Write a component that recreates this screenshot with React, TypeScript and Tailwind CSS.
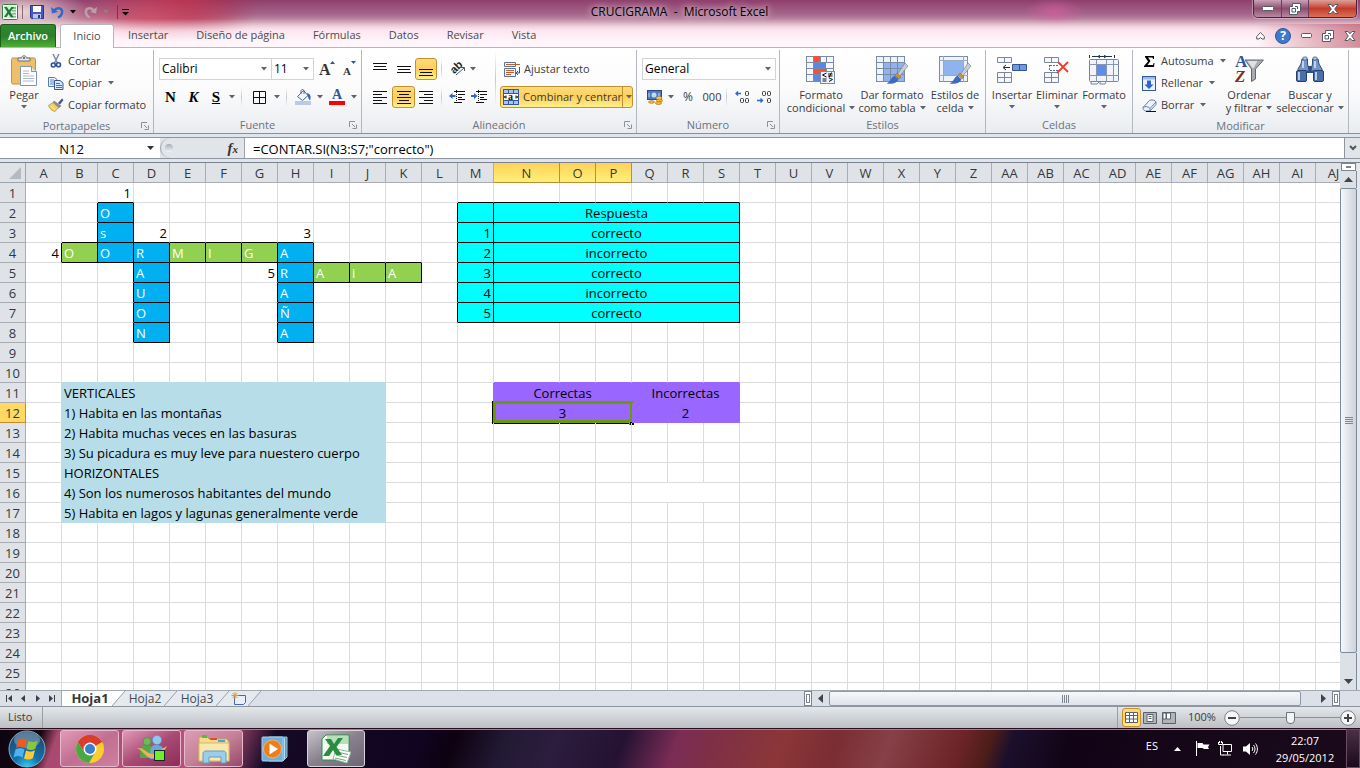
import React, { useState } from 'react';
import clsx from 'clsx';

const GRID_ROWS = 40;
const COLUMN_COUNT = 54;

const columnName = (index: number): string =>
  index < 26 ? String.fromCharCode(65 + index) : columnName(Math.floor(index / 26) - 1) + String.fromCharCode(65 + (index % 26));

const COLUMNS = Array.from({ length: COLUMN_COUNT }, (_, i) => columnName(i));
const columnIndex = (name: string) => COLUMNS.indexOf(name);

type Tone = 'blue' | 'green' | 'cyan' | 'clue' | 'violet';

interface CellData {
  text?: string;
  tone?: Tone;
  align?: 'left' | 'center' | 'right';
  span?: number;
}

const CELLS: Record<string, CellData> = {
  C1: { text: '1', align: 'right' },
  C2: { text: 'O', tone: 'blue' },
  C3: { text: 's', tone: 'blue' },
  D3: { text: '2', align: 'right' },
  H3: { text: '3', align: 'right' },
  A4: { text: '4', align: 'right' },
  B4: { text: 'O', tone: 'green' },
  C4: { text: 'O', tone: 'blue' },
  D4: { text: 'R', tone: 'blue' },
  E4: { text: 'M', tone: 'green' },
  F4: { text: 'I', tone: 'green' },
  G4: { text: 'G', tone: 'green' },
  H4: { text: 'A', tone: 'blue' },
  D5: { text: 'A', tone: 'blue' },
  G5: { text: '5', align: 'right' },
  H5: { text: 'R', tone: 'blue' },
  I5: { text: 'A', tone: 'green' },
  J5: { text: 'i', tone: 'green' },
  K5: { text: 'A', tone: 'green' },
  D6: { text: 'U', tone: 'blue' },
  H6: { text: 'A', tone: 'blue' },
  D7: { text: 'O', tone: 'blue' },
  H7: { text: 'Ñ', tone: 'blue' },
  D8: { text: 'N', tone: 'blue' },
  H8: { text: 'A', tone: 'blue' },
  M2: { tone: 'cyan' },
  N2: { text: 'Respuesta', tone: 'cyan', align: 'center', span: 6 },
  N11: { text: 'Correctas', tone: 'violet', align: 'center', span: 3 },
  Q11: { text: 'Incorrectas', tone: 'violet', align: 'center', span: 3 },
  N12: { text: '3', tone: 'violet', align: 'center', span: 3 },
  Q12: { text: '2', tone: 'violet', align: 'center', span: 3 },
  Q16: { span: 3 },
};

['correcto', 'incorrecto', 'correcto', 'incorrecto', 'correcto'].forEach((answer, i) => {
  CELLS[`M${i + 3}`] = { text: String(i + 1), tone: 'cyan', align: 'right' };
  CELLS[`N${i + 3}`] = { text: answer, tone: 'cyan', align: 'center', span: 6 };
});

[
  'VERTICALES',
  '1) Habita en las montañas',
  '2) Habita muchas veces en las basuras',
  '3) Su picadura es muy leve para nuestero cuerpo',
  'HORIZONTALES',
  '4) Son los numerosos habitantes del mundo',
  '5) Habita en lagos y lagunas generalmente verde',
].forEach((clue, i) => {
  CELLS[`B${i + 11}`] = { text: clue, tone: 'clue', span: 9 };
});

// every covered square of a merged cell points at the tone of its first square
const TONES: Record<string, Tone> = {};
const COVERED = new Set<string>();
Object.entries(CELLS).forEach(([key, cell]) => {
  const col = columnIndex(key.replace(/\d+/, ''));
  const row = key.replace(/\D+/, '');
  for (let i = 0; i < (cell.span ?? 1); i += 1) {
    const name = `${COLUMNS[col + i]}${row}`;
    if (cell.tone) TONES[name] = cell.tone;
    if (i > 0) COVERED.add(name);
  }
});

const TONE_CLASS: Record<Tone, string> = {
  blue: 'bg-[#00b0f0] text-white',
  green: 'bg-[#92d050] text-white',
  cyan: 'bg-[#00ffff] text-black',
  clue: 'bg-[#b7dde8] text-black',
  violet: 'bg-[#9966ff] text-black',
};

const edgeOf = (own?: Tone, next?: Tone): 'black' | 'clue' | 'violet' | 'line' => {
  const tones = [own, next];
  if (tones.some((t) => t === 'blue' || t === 'green' || t === 'cyan')) return 'black';
  if (tones.includes('clue')) return 'clue';
  if (tones.includes('violet')) return 'violet';
  return 'line';
};

const RIGHT_EDGE = { black: 'border-r-black', clue: 'border-r-[#b7dde8]', violet: 'border-r-[#9966ff]', line: 'border-r-[#dadcdd]' };
const BOTTOM_EDGE = { black: 'border-b-black', clue: 'border-b-[#b7dde8]', violet: 'border-b-[#9966ff]', line: 'border-b-[#dadcdd]' };

const Caret = ({ className = '' }: { className?: string }) => (
  <svg width="6" height="4" viewBox="0 0 6 4" className={clsx('shrink-0 fill-[#5f646c]', className)} aria-hidden="true">
    <path d="M0 0h6L3 3.6z" />
  </svg>
);

const Divider = ({ className = '' }: { className?: string }) => (
  <span className={clsx('w-px shrink-0 bg-gradient-to-b from-transparent via-[#c5c9cf] to-transparent', className)} />
);

interface GroupProps {
  label: string;
  className: string;
  launcher?: boolean;
  children: React.ReactNode;
}

const Group = ({ label, className, launcher, children }: GroupProps) => (
  <section aria-label={label} className={clsx('flex shrink-0 flex-col border-r border-[#b4b8be]', className)}>
    <div className="h-[66px]">{children}</div>
    <div className="relative h-[18px] pt-0.5 text-center leading-4 text-[#6b7280]">
      {label}
      {launcher && (
        <button type="button" aria-label={`Opciones de ${label}`} className="absolute right-1 top-1.5">
          <svg width="8" height="8" viewBox="0 0 8 8" fill="none" stroke="#8d9299" aria-hidden="true">
            <path d="M.5 6V.5H6M3 3l3 3M7.5 3.5v4h-4" />
          </svg>
        </button>
      )}
    </div>
  </section>
);

interface BigButtonProps {
  icon: React.ReactNode;
  lines: string[];
  className: string;
}

const BigButton = ({ icon, lines, className }: BigButtonProps) => (
  <button type="button" className={clsx('flex shrink-0 flex-col items-center pt-1', className)}>
    <span className="flex h-8 items-center">{icon}</span>
    {lines.map((line, i) => (
      <span key={line} className={clsx('flex h-[13px] items-center gap-1 whitespace-nowrap leading-[13px]', i === 0 && 'mt-0.5')}>
        {line}
        {i === 1 && <Caret />}
      </span>
    ))}
    {lines.length === 1 && <Caret className="mt-1" />}
  </button>
);

interface SmallButtonProps {
  icon: React.ReactNode;
  label: string;
  caret?: boolean;
}

const SmallButton = ({ icon, label, caret }: SmallButtonProps) => (
  <button type="button" className="flex h-[22px] items-center gap-1 whitespace-nowrap">
    <span className="flex w-4 justify-center">{icon}</span>
    {label}
    {caret && <Caret className="ml-0.5" />}
  </button>
);

const ToolButton = ({ label, className, children }: { label: string; className: string; children: React.ReactNode }) => (
  <button type="button" aria-label={label} className={clsx('flex h-[22px] shrink-0 items-center justify-center', className)}>
    {children}
  </button>
);

const ACTIVE = 'rounded-[3px] border border-[#c29232] bg-gradient-to-b from-[#fddb7b] via-[#fecf57] to-[#fff08a]';

const Lines = ({ rows }: { rows: [number, number, number][] }) => (
  <svg width="16" height="16" viewBox="0 0 16 16" fill="#111" aria-hidden="true">
    {rows.map(([x, y, w]) => (
      <rect key={y} x={x} y={y} width={w} height="1" />
    ))}
  </svg>
);

const ExcelLogo = ({ size }: { size: number }) => (
  <svg width={size} height={size} viewBox="0 0 16 16" aria-hidden="true">
    <rect x=".5" y=".5" width="15" height="15" rx="1" fill="#fff" stroke="#2b8a3e" />
    <rect x="2" y="2" width="12" height="12" fill="#d8eed8" />
    <path d="M9 3h5v2H9zM10 6h4v1.500h-4zM10 9h4v1.500h-4zM9 12h5v1.500H9z" fill="#7fbf86" />
    <path d="M2 3h3l2 3.200L9.500 3H12L8.300 8l3.400 5.200H8.600L6.600 9.900 4.600 13H2l3.400-5z" fill="#1d7a35" />
  </svg>
);

const ScissorsIcon = () => (
  <svg width="12" height="16" viewBox="0 0 12 16" fill="none" aria-hidden="true">
    <path d="M3 1l4.500 9M9 1L4.500 10" stroke="#7d8ca3" strokeWidth="1.600" />
    <circle cx="3.300" cy="12" r="2" stroke="#2c4f9e" strokeWidth="1.600" />
    <circle cx="8.500" cy="11.800" r="2" stroke="#2c4f9e" strokeWidth="1.600" />
  </svg>
);

const CopyIcon = () => (
  <svg width="16" height="14" viewBox="0 0 16 14" aria-hidden="true">
    <path d="M.5 1.500h6l2.500 2v7H.5z" fill="#eaf1fb" stroke="#5b7bb5" />
    <path d="M2 4h4M2 6h4M2 8h4" stroke="#5b86cf" />
    <path d="M6.500 4.500h5.500l3 2.500v6.500H6.500z" fill="#dfeafa" stroke="#31579f" />
    <path d="M8 7.500h4M8 9.500h6M8 11.500h6" stroke="#3f6dc0" />
  </svg>
);

const BrushIcon = () => (
  <svg width="16" height="14" viewBox="0 0 16 14" aria-hidden="true">
    <path d="M10 5l4-4.500 1.500 1.500L12 6.500z" fill="#4a4f8c" />
    <path d="M6 3l7 5-2.500 2L5 5z" fill="#8c8f96" stroke="#666" strokeWidth=".5" />
    <path d="M5 4.500l5.500 5L7 13.500C4 13 1.500 10.500.5 7.500z" fill="#f3cf63" stroke="#b08a2b" strokeWidth=".7" />
    <path d="M3 7.500L7 12" stroke="#fff2b8" />
  </svg>
);

const ClipboardIcon = () => (
  <svg width="28" height="31" viewBox="0 0 28 31" aria-hidden="true">
    <rect x="1.500" y="3" width="24" height="26" rx="1.500" fill="#eebf6a" stroke="#c8913b" />
    <path d="M8 6V3h3.500c0-3 5-3 5 0H20v3z" fill="#e3e5e8" stroke="#6d7178" />
    <circle cx="14" cy="3" r="1" fill="#555" />
    <path d="M10.500 11.500h11l5 5v14h-16z" fill="#fff" stroke="#7f93b5" />
    <path d="M21.500 11.500v5h5" fill="#dce6f3" stroke="#7f93b5" />
    <path d="M13 16h6M13 18.500h6M13 21h11M13 23.500h11M13 26h11" stroke="#a9b9d2" />
  </svg>
);

const PaintBrush = () => (
  <g>
    <path d="M30 8L22 20l2 2 9-11z" fill="#c9ccd1" stroke="#777" strokeWidth=".6" />
    <path d="M20 20l2-2 4 4-2 2z" fill="#c79243" stroke="#8a6122" strokeWidth=".5" />
    <path d="M19.500 20.500l4 4c-2 4-6 5-12 4 4-1.500 4-5.500 8-8z" fill="#3a6cc4" />
  </g>
);

const ConditionalIcon = () => (
  <svg width="32" height="30" viewBox="0 0 32 30" aria-hidden="true">
    <rect x="1.500" y="1.500" width="27" height="25" fill="#f3f7fc" stroke="#7a8ba6" />
    <path d="M8 1h7v6H8zM8 13h13v6H8z" fill="#f0503c" />
    <path d="M8 7h13v6H8zM8 20h7v6H8z" fill="#5b86e5" />
    <path d="M1 7.500h28M1 13.500h28M1 19.500h28M8.500 1v25M21.500 1v6M15.500 1v6M21.500 13v7" stroke="#7a8ba6" fill="none" />
    <rect x="15.500" y="16.500" width="14" height="12" fill="#eef4fb" stroke="#7a8ba6" />
    <path d="M21.500 18l-4 2 4 2M17.500 24h4M17.500 26h4M23 19h4.500M23 21h4.500M26.500 17.500l-2.500 5M24 23l3.500 1.500L24 26.500" stroke="#111" fill="none" />
  </svg>
);

const TableFormatIcon = () => (
  <svg width="34" height="30" viewBox="0 0 34 30" aria-hidden="true">
    <rect x="1.500" y="1.500" width="28" height="25" fill="#eef3fa" stroke="#7a8ba6" />
    <path d="M9 8h20v18H9z" fill="#8fb3ef" />
    <path d="M1 7.500h29M1 13.500h29M1 19.500h29M8.500 1v26M15.500 1v26M22.500 1v26" stroke="#7a8ba6" fill="none" />
    <PaintBrush />
  </svg>
);

const CellStylesIcon = () => (
  <svg width="34" height="30" viewBox="0 0 34 30" aria-hidden="true">
    <rect x="1.500" y="1.500" width="28" height="25" fill="#eef3fa" stroke="#7a8ba6" />
    <path d="M6 6h19v14H6z" fill="#8fb3ef" />
    <path d="M1 5.500h29M1 20.500h29M5.500 1v26M25.500 1v26" stroke="#9aa9c0" fill="none" />
    <PaintBrush />
  </svg>
);

const InsertCellsIcon = () => (
  <svg width="32" height="28" viewBox="0 0 32 28" aria-hidden="true">
    <path d="M1.500 1.500h14v5h-14zM8.500 1.500v5M1.500 16.500h14v10h-14zM8.500 16.500v10M1.500 21.500h14" fill="#f5f7fa" stroke="#7b8798" />
    <path d="M16.500 8.500h14v6h-14z" fill="#6e98e8" stroke="#35558f" />
    <path d="M23.500 8.500v6" stroke="#35558f" />
    <path d="M14 11.500H8M10 9l-3 2.500L10 14" stroke="#1c2a44" fill="none" />
  </svg>
);

const DeleteCellsIcon = () => (
  <svg width="28" height="28" viewBox="0 0 28 28" aria-hidden="true">
    <path d="M1.500 1.500h14v5h-14zM8.500 1.500v5M1.500 16.500h14v10h-14zM8.500 16.500v10M1.500 21.500h14" fill="#f5f7fa" stroke="#7b8798" />
    <path d="M7 9.500h8M7 14.500h8M6.500 9v6" stroke="#3f6dc0" strokeDasharray="2 1" />
    <path d="M15 6l10 10M25 6L14 17" stroke="#f23c22" strokeWidth="1.800" />
  </svg>
);

const FormatCellsIcon = () => (
  <svg width="32" height="31" viewBox="0 0 32 31" aria-hidden="true">
    <path d="M1.500 3V0M26.500 3V0M4 1.500h20M12 0l-2 1.500L12 3M16 0l2 1.500L16 3" stroke="#1f3252" fill="none" />
    <rect x="1.500" y="4.500" width="29" height="22" rx="1" fill="#f1f5fb" stroke="#73849f" />
    <path d="M1 9.500h30M1 20.500h30M8.500 5v22M18.500 5v22M25.500 5v22" stroke="#8796ae" fill="none" />
    <path d="M9 10h9v10H9z" fill="#5f8de6" />
    <path d="M3 27v2h6l2-2M12 27v2h5l1-2" stroke="#73849f" fill="none" />
  </svg>
);

const SortFilterIcon = () => (
  <svg width="32" height="32" viewBox="0 0 32 32" aria-hidden="true">
    <text x="2" y="13" fontFamily="Liberation Serif" fontWeight="700" fontSize="17" fill="#2f5597">A</text>
    <text x="2" y="28" fontFamily="Liberation Serif" fontWeight="700" fontStyle="italic" fontSize="17" fill="#8b2a22">Z</text>
    <path d="M12 6h18.500L22.500 15v10l-4 2.500V15z" fill="#a8acb1" stroke="#64686d" />
    <path d="M14.500 7h10l-4 7h-1z" fill="#dfe1e4" />
  </svg>
);

const BinocularsIcon = () => (
  <svg width="30" height="28" viewBox="0 0 30 28" aria-hidden="true">
    <path d="M12 10h6v7h-6z" fill="#30507f" />
    <path d="M7 3h5.500v5L14 14v1H3v-2L6 8zM23 3h-5.500v5L16 14v1h11v-2l-3-5z" fill="#7395c4" stroke="#32507f" />
    <rect x="8" y="1" width="4" height="3" rx="1" fill="#b8cbe6" stroke="#32507f" strokeWidth=".7" />
    <rect x="18" y="1" width="4" height="3" rx="1" fill="#b8cbe6" stroke="#32507f" strokeWidth=".7" />
    <rect x="1.500" y="14.500" width="10" height="11" rx="1.500" fill="#4a6fa9" stroke="#263f6b" />
    <rect x="18.500" y="14.500" width="10" height="11" rx="1.500" fill="#4a6fa9" stroke="#263f6b" />
    <path d="M4 16v8M21 16v8M8 5v7M20 5v7" stroke="#d5e2f4" strokeWidth="1.600" />
  </svg>
);

const FillBucketIcon = () => (
  <svg width="17" height="16" viewBox="0 0 17 16" aria-hidden="true">
    <path d="M2.500 7.500l6-6 4.500 5-5.500 5z" fill="#f2f6fb" stroke="#4a6695" />
    <path d="M6 5V2c0-2 3-2 3 0v3" fill="none" stroke="#4a6695" />
    <path d="M12 4c4 1 4 4 3 7.500-1-1-1.500-2-2.500-5z" fill="#3467b5" />
    <rect y="12" width="16" height="4" fill="#b8cce4" />
  </svg>
);

const FontColorIcon = () => (
  <svg width="16" height="16" viewBox="0 0 16 16" aria-hidden="true">
    <text x="3" y="10" fontFamily="Liberation Serif" fontWeight="700" fontSize="14" fill="#2f5597">A</text>
    <rect y="12" width="16" height="4" fill="#f00" />
  </svg>
);

const MergeIcon = () => (
  <svg width="16" height="16" viewBox="0 0 16 16" aria-hidden="true">
    <rect x=".5" y=".5" width="15" height="15" fill="#fff" stroke="#31579f" />
    <path d="M1 1h14v3H1zM1 12h14v3H1z" fill="#a9c3ec" />
    <path d="M0 4.500h16M0 11.500h16M5.500 1v3M10.500 1v3M5.500 12v3M10.500 12v3" stroke="#31579f" />
    <text x="5" y="11" fontFamily="Liberation Serif" fontWeight="700" fontSize="10" fill="#111">a</text>
    <path d="M1 8h3M3 6.500L1.500 8 3 9.500M15 8h-3M13 6.500L14.500 8 13 9.500" stroke="#111" fill="none" />
  </svg>
);

const WrapIcon = () => (
  <svg width="16" height="15" viewBox="0 0 16 15" aria-hidden="true">
    <path d="M.5.5h11v4H.5zM.5 6.500h11v8H.5z" fill="#eef3fa" stroke="#5b7298" />
    <path d="M2 2.500h14M2 8.500h8M2 10.500h8M2 12.500h5" stroke="#b5602e" />
    <path d="M15.500 5v6h-3M14 9l-2 2 2 2" stroke="#2f5597" fill="none" />
  </svg>
);

const OrientationIcon = () => (
  <svg width="18" height="16" viewBox="0 0 18 16" aria-hidden="true">
    <text x="1" y="11" transform="rotate(-45 6 7)" fontFamily="Liberation Sans" fontWeight="700" fontSize="11" fill="#222">ab</text>
    <path d="M7 14l8-7M15.500 10V6.500h-4" stroke="#555" fill="none" />
  </svg>
);

const IndentIcon = ({ flip }: { flip?: boolean }) => (
  <svg width="17" height="16" viewBox="0 0 17 16" aria-hidden="true">
    <path d="M5 2.500h11M9 5.500h7M9 8.500h4M9 10.500h7M5 13.500h8" stroke="#111" />
    <path d="M7.500 1v14" stroke="#111" strokeDasharray="1 1" />
    <path d={flip ? 'M0 6h3V4l3.500 3L3 10V8H0z' : 'M6.500 6h-3V4L0 7l3.500 3V8h3z'} fill="#2f66c9" />
  </svg>
);

const CurrencyIcon = () => (
  <svg width="18" height="17" viewBox="0 0 18 17" aria-hidden="true">
    <rect x="1.500" y="1.500" width="14" height="9" fill="#4f7ac0" stroke="#2b4a86" />
    <circle cx="8" cy="6" r="2.500" fill="#c7d8f2" />
    <path d="M3 4v4M13 4v4" stroke="#c7d8f2" />
    <ellipse cx="13" cy="9" rx="3" ry="1.500" fill="#ffd75e" stroke="#a8741a" strokeWidth=".7" />
    <ellipse cx="13.500" cy="11.500" rx="3" ry="1.500" fill="#f8b93a" stroke="#a8741a" strokeWidth=".7" />
    <ellipse cx="12.500" cy="14" rx="3" ry="1.500" fill="#f8b93a" stroke="#a8741a" strokeWidth=".7" />
    <ellipse cx="5.500" cy="13" rx="3" ry="1.300" fill="#f8b93a" stroke="#a8741a" strokeWidth=".7" />
  </svg>
);

const DecimalIcon = ({ reduce }: { reduce?: boolean }) => (
  <svg width="16" height="16" viewBox="0 0 16 16" aria-hidden="true">
    <g fill="none" stroke="#333">
      <rect x="11.500" y="2.500" width="3" height="4" rx="1" />
      <rect x="11.500" y="9.500" width="3" height="4" rx="1" />
      <rect x="6.500" y={reduce ? 2.5 : 9.5} width="3" height="4" rx="1" />
    </g>
    <path d={reduce ? 'M1 11.500h5M4.500 9.500l2 2-2 2' : 'M2 4.500h5M4 2.500l-2 2 2 2'} stroke="#2f66c9" fill="none" strokeWidth="1.400" />
  </svg>
);

const SigmaIcon = () => (
  <svg width="11" height="11" viewBox="0 0 11 11" aria-hidden="true">
    <path d="M1 0h9v3H9l-.5-1.500H4L6.500 5 3.500 9H9l.7-2h.8L10 11H0v-1l4-4.500L1 1z" />
  </svg>
);

const FillDownIcon = () => (
  <svg width="14" height="15" viewBox="0 0 14 15" aria-hidden="true">
    <rect x=".5" y=".5" width="13" height="14" fill="#eaf1fb" stroke="#31579f" />
    <path d="M1 1h12v2.500H1z" fill="#9fb9e2" />
    <path d="M5 4.500h4v4h2.500L7 13 2.500 8.500H5z" fill="#2f66c9" />
  </svg>
);

const EraserIcon = () => (
  <svg width="15" height="13" viewBox="0 0 15 13" aria-hidden="true">
    <path d="M1 8.500L7.500 1.500C9 .3 13.500 1 14 3v2.500L8 12H3.500C1.500 11.500.8 10 1 8.500z" fill="#eef2f8" stroke="#6a7ea3" />
    <path d="M1 8.500C3 7 7 7.500 8 9.500V12M8 9.500L14 3" fill="none" stroke="#6a7ea3" />
    <path d="M4 12.500h10" stroke="#111" />
  </svg>
);

const QuickAccess = () => (
  <div className="flex h-6 flex-1 items-center pl-0.5">
    <ExcelLogo size={16} />
    <span className="ml-1 h-3.5 w-px bg-[#8d6a75]" />
    <button type="button" aria-label="Guardar" className="ml-1.5">
      <svg width="16" height="16" viewBox="0 0 16 16" aria-hidden="true">
        <path d="M1.500 1.500h13v13h-12l-1-1z" fill="#4559c0" stroke="#28358c" />
        <path d="M4 2h8v6H4z" fill="#fff" />
        <path d="M4 10h8v4.500H4z" fill="#b9c6e8" />
        <path d="M9 11h2v3H9z" fill="#28358c" />
      </svg>
    </button>
    <button type="button" aria-label="Deshacer" className="ml-1.5 flex items-center gap-1.5">
      <svg width="13" height="14" viewBox="0 0 13 14" fill="none" aria-hidden="true">
        <path d="M3 6c3-4.500 9-3 8 2-.4 2-1.500 3.500-4 4.500" stroke="#2f6ac8" strokeWidth="2.400" />
        <path d="M0 2l1 6.500L7 7z" fill="#2f6ac8" />
      </svg>
      <Caret className="fill-black" />
    </button>
    <button type="button" aria-label="Rehacer" className="ml-2 flex items-center gap-1.5">
      <svg width="13" height="14" viewBox="0 0 13 14" fill="none" aria-hidden="true">
        <path d="M10 6C7 1.500 1 3 2 8c.4 2 1.500 3.500 4 4.500" stroke="#b8a0a4" strokeWidth="2.400" />
        <path d="M13 2l-1 6.500L6 7z" fill="#b8a0a4" />
      </svg>
      <Caret className="fill-[#9d7c80]" />
    </button>
    <span className="ml-2 h-3.5 w-px bg-[#6b3c46]" />
    <button type="button" aria-label="Personalizar barra de acceso rápido" className="ml-1">
      <svg width="7" height="7" viewBox="0 0 7 7" aria-hidden="true">
        <path d="M0 0h7v1H0zM0 3h7L3.500 6.500z" />
      </svg>
    </button>
  </div>
);

const RestoreGlyph = ({ size }: { size: number }) => (
  <svg width={size} height={size} viewBox="0 0 12 12" aria-hidden="true">
    <path d="M3.500.5h8v8h-3v3h-8v-8h3z" fill="#fff" stroke="#555b66" />
    <path d="M3 5.500h3.500V9H3zM6 3.500h2.500V6" fill="none" stroke="#555b66" />
  </svg>
);

const CrossGlyph = () => (
  <svg width="12" height="10" viewBox="0 0 12 10" aria-hidden="true">
    <path d="M1 .5h3l2 2.300L8 .5h3L7.700 5 11 9.500H8L6 7.200 4 9.500H1L4.300 5z" fill="#fff" stroke="#555b66" />
  </svg>
);

const WindowButtons = () => (
  <div className="flex h-6 flex-1 items-start justify-end pr-[3px]">
    <div className="flex h-[18px] overflow-hidden rounded-b-[5px] border border-t-0 border-[#4f2138] shadow-[0_0_0_1px_rgba(255,255,255,0.35)]">
      <button type="button" aria-label="Minimizar" className="flex w-7 items-center justify-center border-r border-[#6d3c57] bg-gradient-to-b from-[#c9a3b8] via-[#8c4e70] to-[#b98aa2]">
        <svg width="12" height="5" viewBox="0 0 12 5" aria-hidden="true"><rect x=".5" y=".5" width="11" height="4" rx="1" fill="#fff" stroke="#555b66" /></svg>
      </button>
      <button type="button" aria-label="Restaurar" className="flex w-[27px] items-center justify-center border-r border-[#6d3c57] bg-gradient-to-b from-[#c9a3b8] via-[#8c4e70] to-[#b98aa2]">
        <RestoreGlyph size={12} />
      </button>
      <button type="button" aria-label="Cerrar" className="flex w-[47px] items-center justify-center bg-gradient-to-b from-[#dc9f98] via-[#c23b2b] to-[#d9705a]">
        <CrossGlyph />
      </button>
    </div>
  </div>
);

const RIBBON_TABS = ['Insertar', 'Diseño de página', 'Fórmulas', 'Datos', 'Revisar', 'Vista'];

const Header = () => (
  <header className="bg-[linear-gradient(transparent_40%,#fde8f1cc_66%,#fff5fa_90%),radial-gradient(ellipse_90px_30px_at_150px_18px,#d0526ccc,transparent),radial-gradient(ellipse_70px_26px_at_20px_12px,#ecd8d8,transparent),radial-gradient(ellipse_80px_60px_at_180px_0px,#b02c48,transparent),radial-gradient(ellipse_30px_14px_at_1054px_12px,#d85fa0aa,transparent),linear-gradient(#8f3f6c,#a5668b_30%,#c899ac_48%,#fbe0ec_66%,#fff5fa)]">
    <div className="flex h-6 items-center">
      <QuickAccess />
      <h1 className="whitespace-pre text-[12px] text-black [text-shadow:0_0_6px_#ffffffcc,0_0_10px_#ffffff99]">{'CRUCIGRAMA  -  Microsoft Excel'}</h1>
      <WindowButtons />
    </div>
    <div className="flex h-[23px] items-stretch">
      <button type="button" className="w-14 rounded-t-[3px] border border-b-0 border-[#19601b] bg-gradient-to-b from-[#2f8a31] via-[#2c7f2b] to-[#4faf35] text-center font-semibold text-white">
        Archivo
      </button>
      <nav className="flex flex-1 text-[#4c4c4c]">
        <button type="button" className="relative z-10 -mb-px ml-1 w-[54px] rounded-t-[3px] border border-b-0 border-[#b4b8be] bg-white">Inicio</button>
        {RIBBON_TABS.map((tab) => (
          <button key={tab} type="button" className="whitespace-nowrap px-3.5">{tab}</button>
        ))}
      </nav>
      <div className="flex items-center gap-2.5 bg-gradient-to-r from-transparent to-[#b5465a99] pr-1">
        <button type="button" aria-label="Minimizar la cinta">
          <svg width="9" height="8" viewBox="0 0 9 8" fill="#fff" stroke="#555b66" aria-hidden="true"><path d="M.7 4.500l3.800-4 3.800 4v2.500H6L4.500 5.500 3 7H.7z" /></svg>
        </button>
        <button type="button" aria-label="Ayuda" className="h-4 w-4 rounded-full border border-[#2c569f] bg-[#3f78cf] text-center text-[12px] font-bold leading-[14px] text-white">?</button>
        <button type="button" aria-label="Minimizar libro">
          <svg width="11" height="5" viewBox="0 0 11 5" aria-hidden="true"><rect x=".5" y=".5" width="10" height="4" rx="1" fill="#fff" stroke="#555b66" /></svg>
        </button>
        <button type="button" aria-label="Restaurar libro"><RestoreGlyph size={12} /></button>
        <button type="button" aria-label="Cerrar libro"><CrossGlyph /></button>
      </div>
    </div>
  </header>
);

interface ComboProps {
  label: string;
  value: string;
  className: string;
}

const Combo = ({ label, value, className }: ComboProps) => (
  <div className={clsx('relative h-[22px] border border-[#d0d3d8] bg-white', className)}>
    <select aria-label={label} defaultValue={value} className="h-full w-full appearance-none bg-transparent pl-0.5 text-[12px] text-black outline-none">
      <option>{value}</option>
    </select>
    <Caret className="pointer-events-none absolute right-1 top-2" />
  </div>
);

const FontGroup = () => (
  <Group label="Fuente" launcher className="w-[208px]">
    <div className="flex flex-col gap-1.5 pl-[5px] pt-2">
      <div className="flex">
        <Combo label="Fuente" value="Calibri" className="w-[113px]" />
        <Combo label="Tamaño" value="11" className="-ml-px w-[43px]" />
        <ToolButton label="Aumentar tamaño" className="ml-0.5 w-[22px]">
          <svg width="16" height="18" viewBox="0 0 16 18" aria-hidden="true">
            <text x="0" y="15" fontFamily="Liberation Serif" fontWeight="700" fontSize="16" fill="#333">A</text>
            <path d="M11 4l2.500-3L16 4z" fill="#2f5597" />
          </svg>
        </ToolButton>
        <ToolButton label="Disminuir tamaño" className="w-[22px]">
          <svg width="15" height="18" viewBox="0 0 15 18" aria-hidden="true">
            <text x="1" y="15" fontFamily="Liberation Serif" fontWeight="700" fontSize="11" fill="#333">A</text>
            <path d="M9 1l2.500 3L14 1z" fill="#2f5597" />
          </svg>
        </ToolButton>
      </div>
      <div className="flex items-center font-['Liberation_Serif',serif] text-[15px] leading-none text-black">
        <ToolButton label="Negrita" className="w-[23px] font-bold">N</ToolButton>
        <ToolButton label="Cursiva" className="w-[23px] font-bold italic">K</ToolButton>
        <ToolButton label="Subrayado" className="w-[22px] font-bold underline">S</ToolButton>
        <ToolButton label="Opciones de subrayado" className="w-[10px]"><Caret /></ToolButton>
        <Divider className="mx-1 h-5" />
        <ToolButton label="Bordes" className="w-[26px]">
          <svg width="13" height="13" viewBox="0 0 13 13" fill="none" stroke="#111" aria-hidden="true"><path d="M.5.5h12v12H.5zM6.500 1v11M1 6.500h11" /></svg>
        </ToolButton>
        <ToolButton label="Opciones de bordes" className="w-[10px]"><Caret /></ToolButton>
        <Divider className="mx-1 h-5" />
        <ToolButton label="Color de relleno" className="w-6"><FillBucketIcon /></ToolButton>
        <ToolButton label="Opciones de relleno" className="w-[10px]"><Caret /></ToolButton>
        <ToolButton label="Color de fuente" className="w-6"><FontColorIcon /></ToolButton>
        <ToolButton label="Opciones de color" className="w-[10px]"><Caret /></ToolButton>
      </div>
    </div>
  </Group>
);

const AlignmentGroup = () => (
  <Group label="Alineación" launcher className="w-[275px]">
    <div className="flex items-center">
      <div className="flex w-[133px] flex-col gap-1.5 pl-1.5 pt-2">
        <div className="flex items-center">
          <ToolButton label="Alinear arriba" className="w-6"><Lines rows={[[1, 2, 14], [2, 5, 12], [1, 8, 14]]} /></ToolButton>
          <ToolButton label="Alinear al medio" className="w-[23px]"><Lines rows={[[1, 5, 14], [2, 8, 12], [1, 11, 14]]} /></ToolButton>
          <ToolButton label="Alinear abajo" className={clsx('w-[22px]', ACTIVE)}><Lines rows={[[1, 8, 14], [2, 11, 12], [1, 14, 14]]} /></ToolButton>
          <Divider className="mx-1 h-5" />
          <ToolButton label="Orientación" className="w-6"><OrientationIcon /></ToolButton>
          <Caret />
        </div>
        <div className="flex items-center">
          <ToolButton label="Alinear a la izquierda" className="w-6"><Lines rows={[[1, 2, 14], [1, 5, 9], [1, 8, 14], [1, 11, 9], [1, 14, 14]]} /></ToolButton>
          <ToolButton label="Centrar" className={clsx('w-[23px]', ACTIVE)}><Lines rows={[[1, 2, 14], [3, 5, 10], [1, 8, 14], [3, 11, 10], [1, 14, 14]]} /></ToolButton>
          <ToolButton label="Alinear a la derecha" className="w-[22px]"><Lines rows={[[1, 2, 14], [6, 5, 9], [1, 8, 14], [6, 11, 9], [1, 14, 14]]} /></ToolButton>
          <Divider className="mx-1 h-5" />
          <ToolButton label="Disminuir sangría" className="w-[22px]"><IndentIcon /></ToolButton>
          <ToolButton label="Aumentar sangría" className="w-[22px]"><IndentIcon flip /></ToolButton>
        </div>
      </div>
      <Divider className="h-14" />
      <div className="flex flex-col gap-1.5 pl-1 pt-2">
        <button type="button" className="flex h-[22px] items-center gap-1 pl-1"><WrapIcon />Ajustar texto</button>
        <div className={clsx('flex h-[22px] w-[133px] items-stretch', ACTIVE)}>
          <button type="button" className="flex flex-1 items-center gap-1 whitespace-nowrap pl-0.5"><MergeIcon />Combinar y centrar</button>
          <button type="button" aria-label="Opciones de combinar" className="flex w-3 shrink-0 items-center justify-center border-l border-[#c29232]"><Caret /></button>
        </div>
      </div>
    </div>
  </Group>
);

const NumberGroup = () => (
  <Group label="Número" launcher className="w-[143px]">
    <div className="flex flex-col gap-1.5 px-[5px] pt-2">
      <Combo label="Formato de número" value="General" className="w-[134px]" />
      <div className="flex items-center">
        <ToolButton label="Formato de contabilidad" className="w-[26px]"><CurrencyIcon /></ToolButton>
        <Caret />
        <ToolButton label="Estilo porcentual" className="w-7 text-[12px]">%</ToolButton>
        <ToolButton label="Estilo millares" className="w-5">000</ToolButton>
        <Divider className="mx-1 h-5" />
        <ToolButton label="Aumentar decimales" className="w-[22px]"><DecimalIcon /></ToolButton>
        <ToolButton label="Disminuir decimales" className="w-[22px]"><DecimalIcon reduce /></ToolButton>
      </div>
    </div>
  </Group>
);

const Ribbon = () => (
  <div className="flex h-[87px] overflow-hidden border-y border-b-[#8b9097] border-t-[#b4b8be] bg-gradient-to-b from-white via-[#fbfbfc] to-[#e9ecf0] pt-0.5 text-[#3b3b3b]">
    <Group label="Portapapeles" launcher className="w-[154px]">
      <div className="flex">
        <BigButton icon={<ClipboardIcon />} lines={['Pegar']} className="w-12" />
        <div>
          <SmallButton icon={<ScissorsIcon />} label="Cortar" />
          <SmallButton icon={<CopyIcon />} label="Copiar" caret />
          <SmallButton icon={<BrushIcon />} label="Copiar formato" />
        </div>
      </div>
    </Group>
    <FontGroup />
    <AlignmentGroup />
    <NumberGroup />
    <Group label="Estilos" className="w-[206px]">
      <div className="flex pl-1">
        <BigButton icon={<ConditionalIcon />} lines={['Formato', 'condicional']} className="w-[74px]" />
        <BigButton icon={<TableFormatIcon />} lines={['Dar formato', 'como tabla']} className="w-[68px]" />
        <BigButton icon={<CellStylesIcon />} lines={['Estilos de', 'celda']} className="w-[58px]" />
      </div>
    </Group>
    <Group label="Celdas" className="w-[147px]">
      <div className="flex pl-1">
        <BigButton icon={<InsertCellsIcon />} lines={['Insertar']} className="w-[44px]" />
        <BigButton icon={<DeleteCellsIcon />} lines={['Eliminar']} className="w-[46px]" />
        <BigButton icon={<FormatCellsIcon />} lines={['Formato']} className="w-[48px]" />
      </div>
    </Group>
    <Group label="Modificar" className="w-[216px]">
      <div className="flex pl-2">
        <div className="w-[80px]">
          <SmallButton icon={<SigmaIcon />} label="Autosuma" caret />
          <SmallButton icon={<FillDownIcon />} label="Rellenar" caret />
          <SmallButton icon={<EraserIcon />} label="Borrar" caret />
        </div>
        <BigButton icon={<SortFilterIcon />} lines={['Ordenar', 'y filtrar']} className="w-[56px]" />
        <BigButton icon={<BinocularsIcon />} lines={['Buscar y', 'seleccionar']} className="w-[66px]" />
      </div>
    </Group>
  </div>
);

const FormulaBar = () => (
  <div className="bg-[#dfe5ee] py-[3px]">
    <div className="flex h-[22px] border-y border-[#8f959e] bg-[#e1e5ea] text-[13px] text-black">
      <div className="flex w-40 items-center bg-white">
        <input aria-label="Cuadro de nombres" defaultValue="N12" className="w-full min-w-0 pr-1 pt-0.5 text-center leading-[18px] outline-none" />
        <svg width="7" height="4" viewBox="0 0 7 4" className="mr-1.5 shrink-0" aria-hidden="true"><path d="M0 0h7L3.500 4z" fill="#333" /></svg>
      </div>
      <div className="flex w-[85px] items-center justify-between rounded-l-full border-l border-r border-[#9ea3ab] bg-[#e1e5ea] pl-1 pr-1.5">
        <span className="h-2 w-2 rounded-full bg-gradient-to-b from-[#a8adb4] to-[#f2f3f5]" />
        <button type="button" aria-label="Insertar función" className="font-['Liberation_Serif',serif] text-[15px] font-bold italic leading-5 text-[#333]">
          f<span className="text-[11px]">x</span>
        </button>
      </div>
      <input aria-label="Barra de fórmulas" defaultValue={'=CONTAR.SI(N3:S7;"correcto")'} className="min-w-0 flex-1 bg-white pl-2 pt-0.5 leading-[18px] outline-none" />
      <button type="button" aria-label="Expandir barra de fórmulas" className="flex w-4 items-center justify-center border-l border-[#8f959e]">
        <svg width="8" height="6" viewBox="0 0 8 6" fill="none" stroke="#555" strokeWidth="2" aria-hidden="true"><path d="M1 1l3 3 3-3" /></svg>
      </button>
    </div>
  </div>
);

const SelectionFrame = () => (
  <span className="pointer-events-none absolute -bottom-0.5 -left-0.5 -right-0.5 -top-0.5 border-b border-l border-black">
    <span className="block h-full border-[3px] border-[#6a9900]" />
    <span className="absolute -bottom-0.5 -right-px h-1 w-[5px] border-l border-t border-[#9966ff] bg-black" />
  </span>
);

const Sheet = () => {
  const selected = ['N', 'O', 'P'];

  return (
    <table className="w-[2000px] table-fixed border-separate border-spacing-0 text-[13px] leading-[17px] text-black">
      <colgroup>
        <col className="w-[26px]" />
        {COLUMNS.map((name) => (
          <col key={name} className={name === 'N' ? 'w-[66px]' : 'w-9'} />
        ))}
      </colgroup>
      <thead>
        <tr>
          <th className="h-5 border-b border-r border-[#9fa4ab] bg-[#dfe3e8] p-0">
            <svg width="12" height="12" viewBox="0 0 12 12" className="ml-auto mr-1" aria-hidden="true"><path d="M12 0v12H0z" fill="#b5bac1" /></svg>
          </th>
          {COLUMNS.map((name) => (
            <th
              key={name}
              scope="col"
              className={clsx(
                'h-5 whitespace-nowrap border-b border-r p-0 pt-0.5 text-center font-normal text-[#33373c]',
                selected.includes(name) ? 'border-[#c08e2f] bg-gradient-to-b from-[#ffd158] to-[#fff07a]' : 'border-[#a9adb3] bg-[#dfe3e8]',
              )}
            >
              {name}
            </th>
          ))}
        </tr>
      </thead>
      <tbody>
        {Array.from({ length: GRID_ROWS }, (_, i) => i + 1).map((row) => (
          <tr key={row}>
            <th
              scope="row"
              className={clsx(
                'h-5 border-b border-r p-0 pt-0.5 text-center font-normal text-[#33373c]',
                row === 12 ? 'border-[#c08e2f] bg-[#ffd961]' : 'border-[#a9adb3] bg-[#dfe3e8]',
              )}
            >
              {row}
            </th>
            {COLUMNS.map((name, col) => {
              const key = `${name}${row}`;
              if (COVERED.has(key)) return null;
              const cell = CELLS[key] ?? {};
              const right = edgeOf(cell.tone, TONES[`${COLUMNS[col + (cell.span ?? 1)]}${row}`]);
              const bottom = edgeOf(cell.tone, TONES[`${name}${row + 1}`]);
              return (
                <td
                  key={key}
                  colSpan={cell.span}
                  className={clsx(
                    'relative h-5 whitespace-nowrap border-b border-r px-0.5 pb-0 pt-0.5',
                    cell.tone && TONE_CLASS[cell.tone],
                    cell.align === 'right' && 'text-right',
                    cell.align === 'center' && 'text-center',
                    RIGHT_EDGE[right],
                    BOTTOM_EDGE[bottom],
                  )}
                >
                  {cell.text}
                  {key === 'N12' && <SelectionFrame />}
                </td>
              );
            })}
          </tr>
        ))}
      </tbody>
    </table>
  );
};

const VerticalScroll = () => (
  <div className="flex w-5 flex-col border-r-[3px] border-[#e4e7ec] bg-[#dce0e7]">
    <div className="mx-px h-2 border border-[#7e848d] bg-white px-1 pt-0.5"><div className="h-0.5 border border-[#7e848d]" /></div>
    <button type="button" aria-label="Subir" className="flex h-[17px] items-center justify-center border-r border-[#7f8a99]">
      <svg width="9" height="5" viewBox="0 0 9 5" aria-hidden="true"><path d="M0 5h9L4.500 0z" fill="#444" /></svg>
    </button>
    <div className="flex flex-1 flex-col items-center justify-center gap-px rounded-[2px] border border-[#7f8a99] bg-gradient-to-r from-[#f6f8fa] to-[#cdd3dc]">
      {[0, 1, 2, 3].map((n) => <span key={n} className="h-px w-2 bg-[#808791]" />)}
    </div>
    <div className="h-5 border-r border-[#7f8a99]" />
    <button type="button" aria-label="Bajar" className="flex h-[17px] items-center justify-center border-r border-[#7f8a99]">
      <svg width="9" height="5" viewBox="0 0 9 5" aria-hidden="true"><path d="M0 0h9L4.500 5z" fill="#444" /></svg>
    </button>
  </div>
);

const NAV_ARROWS = [
  { label: 'Primera hoja', d: 'M0 0h1v7H0zM6 0v7L2 3.500z' },
  { label: 'Hoja anterior', d: 'M5 0v7L1 3.500z' },
  { label: 'Hoja siguiente', d: 'M1 0v7l4-3.500z' },
  { label: 'Última hoja', d: 'M0 0v7l4-3.500zM5 0h1v7H5z' },
];

const Slant = ({ left, right }: { left: string; right: string }) => (
  <svg width="14" height="15" viewBox="0 0 14 15" className="shrink-0" aria-hidden="true">
    <path d="M0 0h13L0 15z" fill={left} />
    <path d="M0 15L13 0h1v15z" fill={right} />
    <path d="M0 15L13 0" stroke="#9ba1aa" />
  </svg>
);

const SheetTabs = () => (
  <div className="flex h-[17px] border-y border-b-[#8e949d] border-t-[#a3a9b2] bg-[#dce0e8] text-[12px] leading-[15px] text-[#444950]">
    <div className="flex w-[62px] items-center justify-between border-r border-[#a3a9b2] px-1.5">
      {NAV_ARROWS.map(({ label, d }) => (
        <button key={label} type="button" aria-label={label}>
          <svg width="6" height="7" viewBox="0 0 6 7" fill="#3c4046" aria-hidden="true"><path d={d} /></svg>
        </button>
      ))}
    </div>
    <div className="flex flex-1 items-stretch">
      <button type="button" className="w-[50px] bg-white pl-1.5 text-[13px] font-bold text-[#33373c]">Hoja1</button>
      <Slant left="#ffffff" right="#e6e9ee" />
      <button type="button" className="w-[38px] bg-[#e6e9ee]">Hoja2</button>
      <Slant left="#e6e9ee" right="#e6e9ee" />
      <button type="button" className="w-[38px] bg-[#e6e9ee]">Hoja3</button>
      <Slant left="#e6e9ee" right="#e6e9ee" />
      <button type="button" aria-label="Insertar hoja" className="flex w-[18px] items-center justify-center bg-[#e6e9ee]">
        <svg width="16" height="13" viewBox="0 0 16 13" aria-hidden="true">
          <path d="M3.500 3.500h11v7l-2 2h-9z" fill="#e8eefa" stroke="#4767a8" />
          <path d="M4 0v7M.5 3.500h7M1.500 1l5 5M6.500 1l-5 5" stroke="#e09a2f" />
        </svg>
      </button>
      <Slant left="#e6e9ee" right="#dce0e8" />
    </div>
    <div className="flex w-[556px] items-stretch pr-5">
      <div className="flex w-2 border border-[#7e848d] bg-white px-px py-0.5"><div className="w-1 border border-[#7e848d]" /></div>
      <button type="button" aria-label="Desplazar a la izquierda" className="flex w-[17px] items-center justify-center">
        <svg width="5" height="9" viewBox="0 0 5 9" aria-hidden="true"><path d="M5 0v9L0 4.500z" fill="#444" /></svg>
      </button>
      <div className="flex flex-1 items-center justify-center gap-px rounded-[2px] border border-[#8e98a6] bg-gradient-to-b from-[#f6f8fa] to-[#dfe3e9]">
        {[0, 1, 2, 3].map((n) => <span key={n} className="h-2 w-px bg-[#808791]" />)}
      </div>
      <div className="w-3.5" />
      <button type="button" aria-label="Desplazar a la derecha" className="flex w-[17px] items-center justify-center">
        <svg width="5" height="9" viewBox="0 0 5 9" aria-hidden="true"><path d="M0 0v9l5-4.500z" fill="#444" /></svg>
      </button>
      <div className="flex w-2 border border-[#7e848d] bg-white px-px py-0.5"><div className="w-1 border border-[#7e848d]" /></div>
    </div>
  </div>
);

const ZoomButton = ({ label, plus }: { label: string; plus?: boolean }) => (
  <button type="button" aria-label={label}>
    <svg width="16" height="16" viewBox="0 0 16 16" aria-hidden="true">
      <circle cx="8" cy="8" r="7.300" fill="#f5f6f8" stroke="#7b8088" />
      <path d={plus ? 'M4 8h8M8 4v8' : 'M4 8h8'} stroke="#444" strokeWidth="2" />
    </svg>
  </button>
);

const StatusBar = () => {
  const [zoom, setZoom] = useState(50);

  return (
    <footer className="flex h-[21px] items-center bg-gradient-to-b from-[#e4e7ea] to-[#bcc0c5] text-[#3b3b3b]">
      <span className="pl-2">Listo</span>
      <span className="ml-2.5 h-full w-px bg-[#9a9ea5]" />
      <span className="flex-1" />
      <span className="mr-1 h-full w-px bg-[#9a9ea5]" />
      <button type="button" aria-label="Normal" className={clsx('flex h-[19px] w-[19px] items-center justify-center', ACTIVE)}>
        <svg width="13" height="11" viewBox="0 0 13 11" fill="#fff" stroke="#5c6068" aria-hidden="true"><path d="M.5.5h12v10H.5zM4.500 1v9M8.500 1v9M1 3.500h11M1 7h11" /></svg>
      </button>
      <button type="button" aria-label="Diseño de página" className="ml-0.5">
        <svg width="14" height="12" viewBox="0 0 14 12" aria-hidden="true"><path d="M.5.5h13v11H.5z" fill="#b0b4ba" stroke="#5c6068" /><path d="M4 2.500h6v7H4z" fill="#fff" stroke="#5c6068" /><path d="M5.500 4.500h3M5.500 6.500h3" stroke="#5c6068" /></svg>
      </button>
      <button type="button" aria-label="Vista previa de salto de página" className="ml-[5px]">
        <svg width="14" height="12" viewBox="0 0 14 12" aria-hidden="true"><path d="M.5.5h13v11H.5z" fill="#b0b4ba" stroke="#5c6068" /><path d="M1 1h3v6H1zM4.500 1h4v6h-4z" fill="#fff" stroke="#5c6068" /></svg>
      </button>
      <span className="ml-3 w-9">100%</span>
      <ZoomButton label="Alejar" />
      <input
        type="range"
        aria-label="Zoom"
        min={0}
        max={100}
        value={zoom}
        onChange={(e) => setZoom(Number(e.target.value))}
        className="h-4 w-[100px] appearance-none bg-[linear-gradient(#8b909c,#8b909c)] bg-[length:100%_1px] bg-center bg-no-repeat [&::-webkit-slider-thumb]:h-3 [&::-webkit-slider-thumb]:w-[9px] [&::-webkit-slider-thumb]:appearance-none [&::-webkit-slider-thumb]:rounded-b-[4px] [&::-webkit-slider-thumb]:border [&::-webkit-slider-thumb]:border-[#6e737b] [&::-webkit-slider-thumb]:bg-[#f3f4f6]"
      />
      <ZoomButton label="Acercar" plus />
      <span className="w-1" />
    </footer>
  );
};

const TASK = 'flex w-[59px] items-center justify-center rounded-[3px] border border-[#e6b9cd]';

const Taskbar = () => (
  <div className="flex h-10 items-stretch border-t border-[#2a0d1f] bg-[linear-gradient(110deg,#0d0410_0,#16060f_40px,#a8496d_56px,#b8537c_180px,#8a3c60_225px,#150a26_260px,#100420_400px,#0e0110_430px,#221a35_480px,#2c1c3d_525px,#251232_590px,#7a2c55_640px,#7f3044_680px,#8c3638_740px,#7a2d33_790px,#874048_840px,#6b2326_910px,#4c1d1a_935px,#1c0f2c_955px,#120416_1010px,#1a0a1c)] text-white shadow-[inset_0_1px_0_#a97a96]">
    <button type="button" aria-label="Inicio" className="flex w-[60px] items-center pl-2">
      <svg width="38" height="38" viewBox="0 0 38 38" aria-hidden="true">
        <defs>
          <radialGradient id="orb" cx=".5" cy="1" r=".9">
            <stop offset="0" stopColor="#2fd0f6" />
            <stop offset=".4" stopColor="#1471ad" />
            <stop offset="1" stopColor="#1d4c72" />
          </radialGradient>
        </defs>
        <circle cx="19" cy="19" r="18" fill="url(#orb)" stroke="#7fb2cf" />
        <ellipse cx="19" cy="10" rx="13" ry="8" fill="#fff" opacity=".28" />
        <path d="M10 10c3-2 6-2 9 0l-2 8c-3-2-6-2-9 0z" fill="#ee5a24" />
        <path d="M20.500 11c3 1.500 6 1.500 9-.5l-2 8c-3 2-6 2-9 .5z" fill="#8cc63e" />
        <path d="M7.500 19.500c3-2 6-2 9 0l-2 8c-3-2-6-2-9 0z" fill="#4cb5ee" />
        <path d="M18 20.500c3 1.500 6 1.500 9-.5l-2 8c-3 2-6 2-9 .5z" fill="#ffc933" />
      </svg>
    </button>
    <div className="flex flex-1 items-stretch gap-[3px] py-px">
      <button type="button" aria-label="Google Chrome" className={clsx(TASK, 'bg-gradient-to-br from-[#e29ab8] via-[#c06f92] to-[#cf7f9f]')}>
        <svg width="28" height="28" viewBox="0 0 28 28" aria-hidden="true">
          <circle cx="14" cy="14" r="14" fill="#f8cf2c" />
          <path d="M14 14L1.900 7A14 14 0 0 1 26.100 7z" fill="#dc3c2c" />
          <path d="M14 7h12.100A14 14 0 0 0 1.900 7L8 17z" fill="#dc3c2c" />
          <path d="M1.900 7A14 14 0 0 0 13 28l6-10.500L8 17z" fill="#4aa748" />
          <circle cx="14" cy="14" r="6.500" fill="#fff" />
          <circle cx="14" cy="14" r="5" fill="#3a7fd0" />
        </svg>
      </button>
      <button type="button" aria-label="Messenger" className={clsx(TASK, 'bg-gradient-to-br from-[#e29ab8] via-[#a84a74] to-[#8e2c58]')}>
        <svg width="32" height="28" viewBox="0 0 32 28" aria-hidden="true">
          <path d="M4 23c0-13 2-13 7-13s6 3 6 13z" fill="#5aa548" />
          <circle cx="11" cy="6.500" r="4" fill="#6cbb58" stroke="#3f8534" strokeWidth=".6" />
          <path d="M14 24c0-14 2-14 7-14s8 3 8 14z" fill="#6ba7d8" />
          <circle cx="21" cy="5" r="4.700" fill="#94c5ea" stroke="#5289b8" strokeWidth=".6" />
          <path d="M1 13c7-1 9 5 15 6 6 0 9-5 15-8-4 8-8 12-15 12S7 15 1 13z" fill="#e9b25c" />
          <rect x="18.500" y="15.500" width="10" height="10" fill="#6cf02c" stroke="#222" />
        </svg>
      </button>
      <button type="button" aria-label="Explorador" className={clsx(TASK, 'bg-gradient-to-br from-[#dd9db5] via-[#c48198] to-[#97486a]')}>
        <svg width="34" height="30" viewBox="0 0 34 30" aria-hidden="true">
          <path d="M2 3h8l2 2h18l2 3v19H2z" fill="#f3dc8c" stroke="#c7a550" />
          <path d="M5 1h5v3H5z" fill="#57b947" />
          <path d="M13 4h7v2h-7z" fill="#d9513c" />
          <path d="M21 6h7v2h-7z" fill="#4ba3dd" />
          <path d="M2 9h30v18H2z" fill="#f8e8ab" stroke="#d5b765" />
          <path d="M6 29V20c0-2 1-3 3-3h17c2 0 3 1 3 3v9h-5v-6H12v6z" fill="#9ccdea" stroke="#5f9fc4" />
        </svg>
      </button>
      <button type="button" aria-label="Reproductor multimedia" className="flex w-[58px] items-center justify-center">
        <svg width="28" height="26" viewBox="0 0 28 26" aria-hidden="true">
          <path d="M8 1h18v20l-4 4H8z" fill="#5c97bf" stroke="#8fc2e0" />
          <path d="M23.500 2v21" stroke="#b4dcf2" />
          <rect x="1" y="1" width="21" height="24" rx="1" fill="#6eb0dc" stroke="#a5d3ee" />
          <circle cx="11.500" cy="13" r="9" fill="#ee7d1c" stroke="#ffb160" />
          <path d="M8.500 7.500v11l8.500-5.500z" fill="#fff" />
        </svg>
      </button>
      <button type="button" aria-label="Microsoft Excel" className="flex w-[58px] items-center justify-center rounded-[3px] border border-[#d9d5dc] bg-gradient-to-br from-[#c7c3ca] via-[#87818d] to-[#6e6475]">
        <svg width="30" height="30" viewBox="0 0 30 30" aria-hidden="true">
          <path d="M5 1h23v25H1V5z" fill="#f4faf4" stroke="#2f8b45" />
          <path d="M6 2h21v8H6z" fill="#b7dfb9" />
          <path d="M15 15l15 3-4 11-14-4z" fill="#fff" stroke="#8fb995" />
          <path d="M16 18l11 2.500M15 21l11 2.500M14 24l11 2.500" stroke="#6fa578" />
          <path d="M4 5h6l3 5 4-6h5l-6.500 9 5.500 8h-6l-3-5-4 6H2l7-10z" fill="#2a8c3f" />
        </svg>
      </button>
    </div>
    <div className="flex items-center">
      <button type="button" className="pb-1">ES</button>
      <button type="button" aria-label="Mostrar iconos ocultos" className="ml-4">
        <svg width="7" height="4" viewBox="0 0 7 4" fill="#fff" aria-hidden="true"><path d="M0 4h7L3.500 0z" /></svg>
      </button>
      <button type="button" aria-label="Centro de actividades" className="ml-3.5">
        <svg width="15" height="15" viewBox="0 0 15 15" aria-hidden="true"><path d="M1 0h1v15H1z" fill="#fff" /><path d="M2.500 2h5l1 1.500h6L13 6l1 2H9L7.500 7h-5z" fill="#fff" /></svg>
      </button>
      <button type="button" aria-label="Red" className="ml-2">
        <svg width="15" height="15" viewBox="0 0 15 15" fill="none" stroke="#fff" aria-hidden="true"><path d="M5 3.500h8.500v7H5zM9.500 10.500v3M5 14h8M2.500 5v9h3M.5 1v2.500h4V1M1.500 0v2M3.500 0v2" /></svg>
      </button>
      <button type="button" aria-label="Volumen" className="ml-2.5">
        <svg width="15" height="14" viewBox="0 0 15 14" aria-hidden="true"><path d="M0 4.500h3L7 1v12L3 9.500H0z" fill="#fff" /><path d="M9 5c1 1 1 3 0 4M10.500 3c2 2 2 6 0 8M12.500 1.500c2.500 3 2.500 8 0 11" stroke="#fff" fill="none" /></svg>
      </button>
      <time className="ml-4 w-[62px] text-center leading-[17px]">
        22:07
        <br />
        29/05/2012
      </time>
      <button type="button" aria-label="Mostrar escritorio" className="ml-2.5 h-full w-3.5 border border-[#6d4a63] bg-gradient-to-b from-[#4a3046] to-[#1b0a1c]" />
    </div>
  </div>
);

export default function App() {
  return (
    <div className="flex h-screen flex-col overflow-hidden bg-white font-['Open_Sans','Noto_Sans',sans-serif] text-[11px]">
      <Header />
      <Ribbon />
      <FormulaBar />
      <main className="flex min-h-0 flex-1 border-t border-[#7d838c]">
        <div className="min-w-0 flex-1 overflow-hidden">
          <Sheet />
        </div>
        <VerticalScroll />
      </main>
      <SheetTabs />
      <StatusBar />
      <Taskbar />
    </div>
  );
}
